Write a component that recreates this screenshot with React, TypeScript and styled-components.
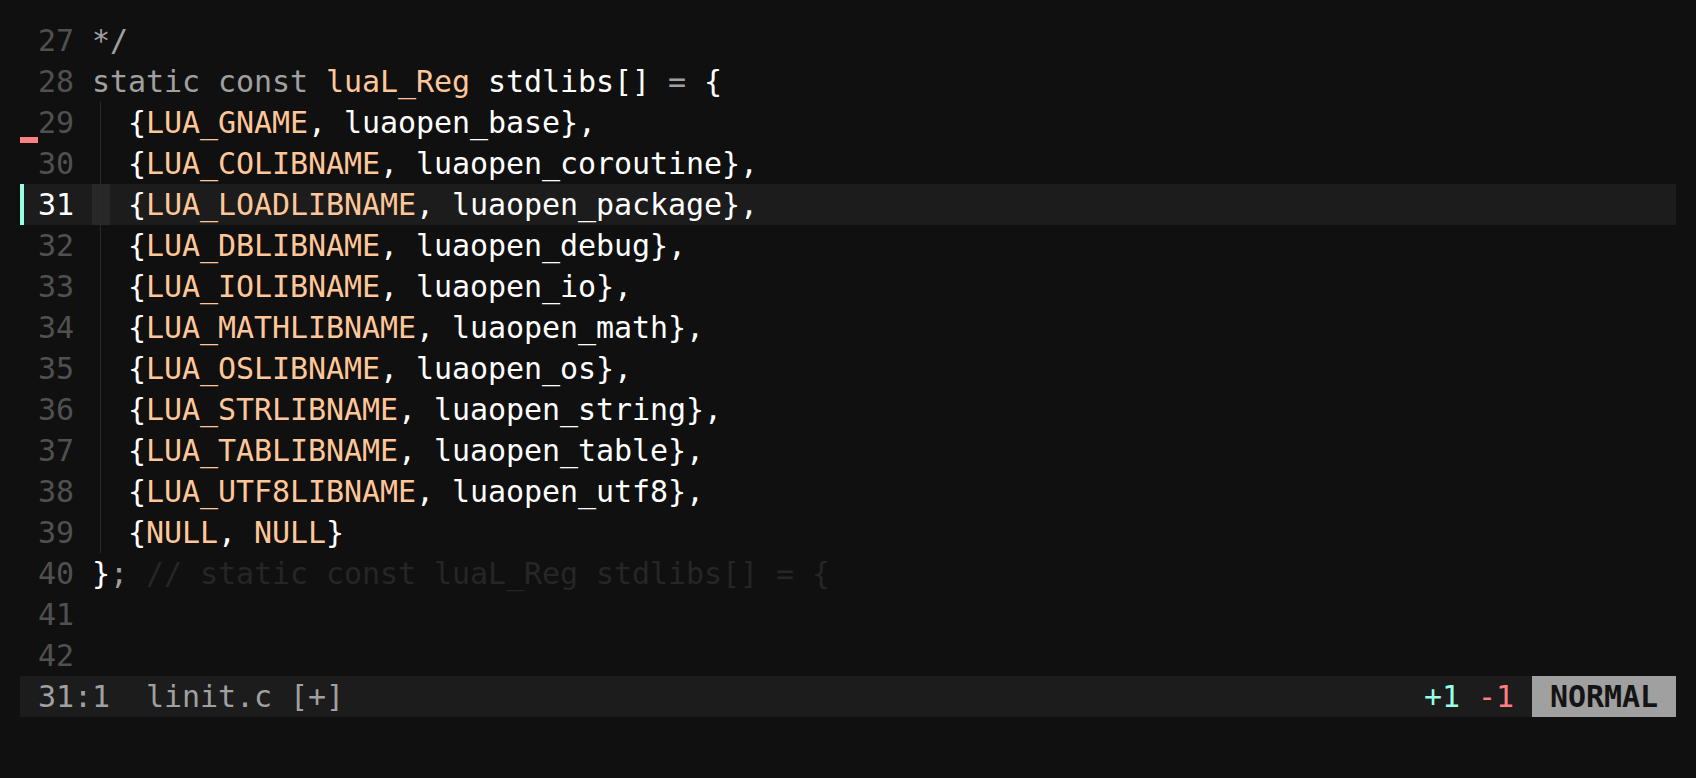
import React from "react";
import styled, { createGlobalStyle } from "styled-components";

const C = {
  bg: "#101010",
  band: "#1c1c1c",
  cursor: "#282828",
  guide: "#2a2a2a",
  num: "#505050",
  text: "#ffffff",
  kw: "#a0a0a0",
  ty: "#ffc799",
  cm: "#262626",
  add: "#99ffe4",
  del: "#ff8080",
};

const GlobalStyle = createGlobalStyle`
  html, body {
    margin: 0;
    padding: 0;
    background: ${C.bg};
  }
  body {
    font-family: "DejaVu Sans Mono", "Liberation Mono", monospace;
    font-size: 30px;
    letter-spacing: -0.06px;
  }
`;

const Screen = styled.div`
  width: 1696px;
  height: 778px;
  box-sizing: border-box;
  padding: 20px;
  background: ${C.bg};
  display: flex;
  flex-direction: column;
`;

const Buffer = styled.div`
  display: flex;
  flex-direction: column;
`;

const Row = styled.div<{ $current?: boolean }>`
  display: flex;
  height: 41px;
  line-height: 41px;
  background: ${(p) => (p.$current ? C.band : "transparent")};
  white-space: pre;
`;

const SignCol = styled.div`
  width: 18px;
  height: 41px;
  display: flex;
  align-items: flex-end;
`;

const AddSign = styled.div`
  width: 4px;
  height: 41px;
  background: ${C.add};
`;

const DelSign = styled.div`
  width: 18px;
  height: 6px;
  background: ${C.del};
`;

const LineNr = styled.div<{ $current?: boolean }>`
  width: 36px;
  text-align: right;
  color: ${(p) => (p.$current ? C.text : C.num)};
`;

const Spacer = styled.div`
  width: 18px;
`;

const Code = styled.div`
  flex: 1;
  display: flex;
  color: ${C.text};
`;

const Indent = styled.span<{ $cursor?: boolean }>`
  display: inline-block;
  width: 36px;
  height: 41px;
  flex: none;
  background:
    linear-gradient(to right, transparent 8px, ${C.guide} 8px, ${C.guide} 9px, transparent 9px),
    ${(p) =>
      p.$cursor
        ? `linear-gradient(to right, ${C.cursor} 18px, transparent 18px)`
        : "transparent"};
`;

const Cursor = styled.span`
  display: inline-block;
  background: ${C.cursor};
`;

const Tok = styled.span<{ $c: string }>`
  color: ${(p) => p.$c};
`;

const StatusBar = styled.div`
  display: flex;
  align-items: center;
  height: 41px;
  line-height: 41px;
  background: ${C.band};
  white-space: pre;
`;

const StatusLeft = styled.div`
  flex: 1;
  padding-left: 18px;
  color: ${C.kw};
`;

const DiffStat = styled.span<{ $c: string }>`
  color: ${(p) => p.$c};
`;

const Mode = styled.div`
  width: 144px;
  text-align: center;
  background: ${C.kw};
  color: #141414;
  font-weight: bold;
  margin-left: 18px;
`;

type T = [string, keyof typeof C];

interface Line {
  n: number;
  indent?: boolean;
  current?: boolean;
  sign?: "add" | "del";
  code: T[];
}

const entry = (name: string, fn: string): T[] => [
  ["{", "text"],
  [name, "ty"],
  [`, ${fn}},`, "text"],
];

const lines: Line[] = [
  { n: 27, code: [["*/", "kw"]] },
  {
    n: 28,
    code: [
      ["static const ", "kw"],
      ["luaL_Reg", "ty"],
      [" stdlibs[] ", "text"],
      ["=", "kw"],
      [" {", "text"],
    ],
  },
  { n: 29, indent: true, sign: "del", code: entry("LUA_GNAME", "luaopen_base") },
  { n: 30, indent: true, code: entry("LUA_COLIBNAME", "luaopen_coroutine") },
  { n: 31, indent: true, current: true, sign: "add", code: entry("LUA_LOADLIBNAME", "luaopen_package") },
  { n: 32, indent: true, code: entry("LUA_DBLIBNAME", "luaopen_debug") },
  { n: 33, indent: true, code: entry("LUA_IOLIBNAME", "luaopen_io") },
  { n: 34, indent: true, code: entry("LUA_MATHLIBNAME", "luaopen_math") },
  { n: 35, indent: true, code: entry("LUA_OSLIBNAME", "luaopen_os") },
  { n: 36, indent: true, code: entry("LUA_STRLIBNAME", "luaopen_string") },
  { n: 37, indent: true, code: entry("LUA_TABLIBNAME", "luaopen_table") },
  { n: 38, indent: true, code: entry("LUA_UTF8LIBNAME", "luaopen_utf8") },
  {
    n: 39,
    indent: true,
    code: [
      ["{", "text"],
      ["NULL", "ty"],
      [", ", "text"],
      ["NULL", "ty"],
      ["}", "text"],
    ],
  },
  {
    n: 40,
    code: [
      ["}", "text"],
      [";", "kw"],
      [" // static const luaL_Reg stdlibs[] = {", "cm"],
    ],
  },
  { n: 41, code: [] },
  { n: 42, code: [] },
];

export default function App() {
  return (
    <>
      <GlobalStyle />
      <Screen>
        <Buffer>
          {lines.map((l) => (
            <Row key={l.n} $current={l.current}>
              <SignCol>
                {l.sign === "add" && <AddSign />}
                {l.sign === "del" && <DelSign />}
              </SignCol>
              <LineNr $current={l.current}>{l.n}</LineNr>
              <Spacer />
              <Code>
                {l.indent && <Indent $cursor={l.current} />}
                {l.code.map(([s, c], i) => (
                  <Tok key={i} $c={C[c]}>
                    {s}
                  </Tok>
                ))}
              </Code>
            </Row>
          ))}
        </Buffer>
        <StatusBar>
          <StatusLeft>31:1  linit.c [+]</StatusLeft>
          <DiffStat $c={C.add}>+1</DiffStat>
          <span> </span>
          <DiffStat $c={C.del}>-1</DiffStat>
          <Mode>NORMAL</Mode>
        </StatusBar>
      </Screen>
    </>
  );
}
